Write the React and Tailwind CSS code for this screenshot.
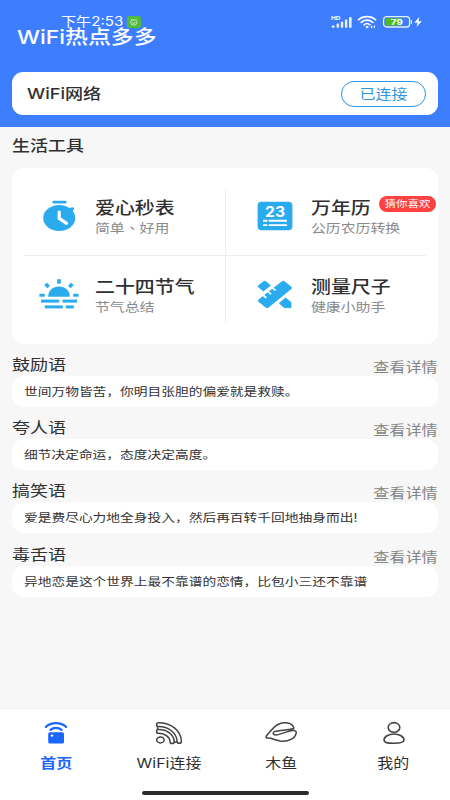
import React from 'react';

const StatusBar = () => (
  <div className="flex items-center h-[14px] mt-[15px] pl-[61px] pr-[28px] text-white">
    <span className="w-[65px] whitespace-nowrap mt-[-1px]">
      <span className="block origin-left scale-x-120 text-[12.6px] leading-[13px]">下午2:53</span>
    </span>
    <svg className="w-[16px] h-[12px]" viewBox="0 0 16 12" fill="none">
      <rect x="0.8" y="0" width="14.4" height="12" rx="3" fill="#4fbb3d" />
      <path d="M5 3.2L6 4H9.6L10.6 3.2M5 4.6C4 7 5 9 7.8 9S11.6 7 10.6 4.6M6.2 6.6L7.8 7.4L9.4 6.6" stroke="#d8f5d0" strokeWidth="0.9" />
    </svg>
    <div className="flex-1" />
    <svg className="w-[21px] h-[14px]" viewBox="0 0 21 14">
      <text x="0" y="5.4" fontSize="5.4" fontWeight="700" fill="#fff" textLength="9.4" lengthAdjust="spacingAndGlyphs">HD</text>
      <g fill="#eaf1ff">
        <rect x="0.8" y="10.5" width="2.8" height="2.2" rx="0.8" />
        <rect x="5.6" y="8.6" width="2.4" height="4.1" rx="0.8" />
        <rect x="9.8" y="6.6" width="2.4" height="6.1" rx="0.8" />
        <rect x="13.9" y="4.4" width="2.4" height="8.3" rx="0.8" />
        <rect x="18" y="2" width="2.6" height="10.7" rx="0.8" />
      </g>
    </svg>
    <svg className="w-[20px] h-[14px] ml-[5px]" viewBox="0 0 20 14" fill="none" stroke="#fff" strokeWidth="1.6" strokeLinecap="round">
      <path d="M1.4 4.8C6 0.6 14 0.6 18.6 4.8M4.2 7.4C7.6 4.4 12.4 4.4 15.8 7.4M7 9.8C8.8 8.2 11.2 8.2 13 9.8" />
      <circle cx="10" cy="12" r="0.9" fill="#fff" strokeWidth="0.8" />
      <path d="M14.6 11.4V12.6M17.4 11V12.4" strokeWidth="1.3" />
    </svg>
    <svg className="w-[30px] h-[14px] ml-[5px]" viewBox="0 0 30 14">
      <rect x="1.6" y="1.6" width="26" height="10.4" rx="3" fill="none" stroke="#e6efff" strokeWidth="1.3" />
      <path d="M5 3.2H20V10.6H5Q3.6 10.6 3.6 9.2V4.6Q3.6 3.2 5 3.2Z" fill="#4ebd1c" />
      <rect x="28.8" y="5" width="1.2" height="3.8" fill="#e6efff" />
      <text x="8.8" y="9.7" fontSize="8" fontWeight="700" fill="#fff" textLength="12" lengthAdjust="spacingAndGlyphs">79</text>
    </svg>
    <svg className="w-[8px] h-[12px] ml-[2px]" viewBox="0 0 8 12">
      <path d="M5.2 1L0.4 6.8H3.6L2.6 11L7.8 5.2H4.6Z" fill="#fff" />
    </svg>
  </div>
);

const StopwatchIcon = () => (
  <svg className="w-[34px] h-[32px]" viewBox="0 0 34 32" fill="none">
    <rect x="10.5" y="0.8" width="14" height="2.8" rx="0.8" fill="#2aabee" />
    <ellipse cx="17.2" cy="18" rx="16" ry="13" fill="#2aabee" />
    <path d="M25.5 10L29 7.4Q31 6.8 32 8.2Q32.4 9.6 31 10.6L28.5 12.5Z" fill="#2aabee" />
    <path d="M17.2 12V18.4L24.5 23.4" stroke="#fff" strokeWidth="3.2" strokeLinecap="round" strokeLinejoin="round" />
  </svg>
);

const CalendarIcon = () => (
  <svg className="w-[36px] h-[30px]" viewBox="0 0 36 30">
    <rect x="0.6" y="0.8" width="34.8" height="28.4" rx="4" fill="#2aabee" />
    <text x="8" y="15.7" fontSize="14" fontWeight="700" fill="#fff" textLength="20" lengthAdjust="spacingAndGlyphs">23</text>
    <g fill="#fff">
      <rect x="6" y="18.8" width="4.4" height="1.9" rx="0.5" />
      <rect x="11.6" y="18.8" width="18.4" height="1.9" rx="0.5" />
      <rect x="6" y="23.2" width="4.4" height="1.9" rx="0.5" />
      <rect x="11.6" y="23.2" width="18.4" height="1.9" rx="0.5" />
    </g>
  </svg>
);

const SunsetIcon = () => (
  <svg className="w-[40px] h-[31px]" viewBox="0 0 40 31" fill="#2aabee">
    <path d="M9.2 17.7C9.2 11.4 14 7.4 20 7.4S30.8 11.4 30.8 17.7Z" />
    <rect x="18.2" y="0.2" width="3.6" height="4.5" />
    <path d="M5.2 6L8 3.8L11 6.8L8.4 9.2ZM34.8 6L32 3.8L29 6.8L31.6 9.2Z" />
    <rect x="0.4" y="14.8" width="5.4" height="2.9" />
    <rect x="34.2" y="14.8" width="5.4" height="2.9" />
    <rect x="2" y="20.6" width="18.2" height="3" />
    <rect x="23.6" y="20.6" width="14.4" height="3" />
    <rect x="5.8" y="26.4" width="18" height="3" />
    <rect x="26.8" y="26.4" width="8" height="3" />
  </svg>
);

const RulerIcon = () => (
  <svg className="w-[36px] h-[30px]" viewBox="0 0 36 30" fill="#2aabee" stroke="#2aabee" strokeWidth="0.8" strokeLinejoin="round">
    <path d="M1.5 5.6L6.6 1.6Q7.7 0.8 8.8 1.6L13.4 5.4L6.4 11L1.4 7Q0.8 6.2 1.5 5.6Z" />
    <path d="M25.2 1.6Q26.4 0.8 27.4 1.6L34.4 7.2Q35 8 34.4 8.6L11.2 27.4Q10.2 28.2 9.2 27.4L1.5 21.4Q1 20.7 1.5 20.1L5.8 16.6L8.6 18.8L10.6 17.2L7.8 15L10.6 12.8L13.4 15L15.2 13.4L12.4 11.4L15.2 9.2L18 11.4L19.8 9.8L17 7.8Z" />
    <path d="M22.2 23.2L28.6 18L34 22.2V27.7H27.4Z" />
  </svg>
);

const HomeIcon = () => (
  <svg className="w-[24px] h-[24px]" viewBox="0 0 24 24" fill="none" stroke="#1a66ff">
    <path d="M1.8 6C7 0.9 17 0.9 22.2 6" strokeWidth="2.2" strokeLinecap="round" />
    <path d="M6.4 8.8C9.6 6.2 14.4 6.2 17.6 8.8" strokeWidth="2.2" strokeLinecap="round" />
    <rect x="4.2" y="11.3" width="15.8" height="11.2" rx="1.6" fill="#1a66ff" stroke="none" />
    <circle cx="8" cy="14.6" r="1.2" fill="#fff" stroke="none" />
  </svg>
);

const WifiIcon = () => (
  <svg className="w-[28px] h-[24px]" viewBox="0 0 28 24" fill="none" stroke="#444" strokeWidth="1.5">
    <ellipse cx="5.4" cy="18.9" rx="3.7" ry="3" />
    <path d="M3.4 8.5C12 8.5 18.8 13.4 19.2 20.4A2 2 0 0 1 15 20.4C14.6 15.6 9.6 12.3 3.4 12.3A1.9 1.9 0 0 1 3.4 8.5Z" />
    <path d="M3.4 1.7C16 1.7 26 9.4 26.4 20.2A2.1 2.1 0 0 1 22.1 20.2C21.6 12 13.6 5.4 3.4 5.4A1.85 1.85 0 0 1 3.4 1.7Z" />
    <path d="M3.4 5.4A1.7 1.7 0 0 0 3.4 8.5M19.2 20.4A1.6 1.6 0 0 0 22.1 20.2" />
  </svg>
);

const WoodfishIcon = () => (
  <svg className="w-[32px] h-[24px]" viewBox="0 0 32 24" fill="none" stroke="#444" strokeWidth="1.5" strokeLinejoin="round" strokeLinecap="round">
    <path d="M28.8 6.8C27 1.6 19.6 0.6 13.4 3.2C8.6 5.4 6.4 9.4 1.4 14.8C0.6 16.2 1.2 17.2 3 17.1C7 17 9.4 19.2 15 20C23.4 21 30.6 17.6 31.2 11.6C31.4 9.8 29.6 9.4 27.6 9.6C22 10 16 13.6 10.8 14C7.8 14 7.4 11.8 9.6 10.6C14 9 22 9.4 28 7.8Q29 7.6 28.8 6.8Z" />
  </svg>
);

const UserIcon = () => (
  <svg className="w-[24px] h-[24px]" viewBox="0 0 24 24" fill="none" stroke="#444" strokeWidth="1.6">
    <ellipse cx="12" cy="6.4" rx="5.8" ry="4.8" />
    <path d="M12 13C17.4 13 22 15.8 22 19C22 21.6 19 22.3 12 22.3S2 21.6 2 19C2 15.8 6.6 13 12 13Z" />
  </svg>
);

const tools = [
  { title: '爱心秒表', desc: <>简单<span className="font-['Noto_Sans_CJK_TC']">、</span>好用</>, Icon: StopwatchIcon },
  { title: '万年历', desc: '公历农历转换', Icon: CalendarIcon, badge: '猜你喜欢' },
  { title: '二十四节气', desc: '节气总结', Icon: SunsetIcon },
  { title: '测量尺子', desc: '健康小助手', Icon: RulerIcon },
];

const quotes = [
  { title: '鼓励语', text: '世间万物皆苦，你明目张胆的偏爱就是救赎。' },
  { title: '夸人语', text: '细节决定命运，态度决定高度。' },
  { title: '搞笑语', text: '爱是费尽心力地全身投入，然后再百转千回地抽身而出!' },
  { title: '毒舌语', text: '异地恋是这个世界上最不靠谱的恋情，比包小三还不靠谱' },
];

const tabs = [
  { label: '首页', Icon: HomeIcon, active: true },
  { label: 'WiFi连接', Icon: WifiIcon },
  { label: '木鱼', Icon: WoodfishIcon },
  { label: '我的', Icon: UserIcon },
];

const ToolItem = ({ title, desc, Icon, badge }) => (
  <div className="relative flex items-center">
    <div className="w-[70.5px] pb-[2px] flex justify-center shrink-0">
      <Icon />
    </div>
    <div className="pt-[4px] whitespace-nowrap">
      <div className="origin-left scale-x-120 text-[16.6px] leading-[20px] font-medium text-[#303030]">{title}</div>
      <div className="origin-left scale-x-120 text-[12.4px] leading-[21px] text-[#8a8a8a]">{desc}</div>
    </div>
    {badge && (
      <span className="absolute left-[139px] top-[2px] w-[57px] h-[16px] rounded-full bg-[#fd4140] text-white text-center whitespace-nowrap">
        <span className="block scale-x-120 text-[9.6px] leading-[16px]">{badge}</span>
      </span>
    )}
  </div>
);

const QuoteSection = ({ title, text }) => (
  <section className="h-[63.2px]">
    <div className="flex justify-between h-[21px] whitespace-nowrap">
      <h3 className="origin-left scale-x-120 text-[15px] leading-[20px] text-[#303030]">{title}</h3>
      <a className="origin-right scale-x-120 text-[13.4px] leading-[24px] text-[#858585]">查看详情</a>
    </div>
    <div className="h-[31px] rounded-[12px] bg-white pl-[12px] whitespace-nowrap">
      <p className="w-fit origin-left scale-x-120 text-[11.45px] leading-[32px] text-[#333]">{text}</p>
    </div>
  </section>
);

const App = () => (
  <div className="w-[450px] h-[800px] overflow-hidden flex flex-col bg-[#f7f7f7] font-['Inter','Noto_Sans_CJK_SC',sans-serif]">
    <header className="h-[127px] shrink-0 flex flex-col bg-[#3d7eff]">
      <StatusBar />
      <h1 className="w-fit ml-[17px] mt-[-2px] origin-left scale-x-120 text-[19.1px] leading-[20px] font-medium text-white">WiFi热点多多</h1>
      <div className="mx-[12px] mt-[25px] h-[43px] rounded-[11px] bg-white flex items-center justify-between pl-[15px] pr-[12px]">
        <span className="pt-[2px] origin-left scale-x-120 text-[15.1px] font-medium text-[#303030]">WiFi网络</span>
        <button className="w-[85px] h-[26px] rounded-full border border-[#2c97e4] text-[#2c97e4]">
          <span className="block scale-x-120 text-[13.3px] leading-[24px]">已连接</span>
        </button>
      </div>
    </header>

    <main className="flex-1 px-[12px]">
      <h2 className="w-fit mt-[8px] origin-left scale-x-120 text-[15px] leading-[22px] font-medium text-[#303030]">生活工具</h2>
      <div className="mt-[11px] h-[176px] rounded-[12px] bg-white px-[12px] pt-[22px]">
        <div className="relative h-[132px] grid grid-cols-[201px_201px] grid-rows-2">
          {tools.map((tool, i) => (
            <div key={i} className={`${i < 2 ? 'pt-[4px]' : 'pt-[17px]'} ${i % 2 ? 'pl-[15px]' : ''}`}>
              <ToolItem {...tool} />
            </div>
          ))}
          <div className="absolute left-0 right-0 top-[65px] h-px bg-[#eeeeee]" />
          <div className="absolute left-[201px] top-0 bottom-0 w-px bg-[#eeeeee]" />
        </div>
      </div>
      <div className="mt-[11px]">
        {quotes.map((q) => (
          <QuoteSection key={q.title} {...q} />
        ))}
      </div>
    </main>

    <nav className="h-[92px] shrink-0 border-t border-[#f0f0f0] bg-white flex flex-col justify-between">
      <div className="grid grid-cols-4 pt-[12px]">
        {tabs.map(({ label, Icon, active }) => (
          <div key={label} className="flex flex-col items-center">
            <Icon />
            <span className={`scale-x-120 mt-[7px] text-[13.3px] leading-[22px] whitespace-nowrap ${active ? 'font-bold text-[#1a66ff]' : 'text-[#303030]'}`}>{label}</span>
          </div>
        ))}
      </div>
      <div className="mx-auto mb-[5px] w-[167px] h-[4px] rounded-full bg-[#2c2c2c]" />
    </nav>
  </div>
);

export default App;
